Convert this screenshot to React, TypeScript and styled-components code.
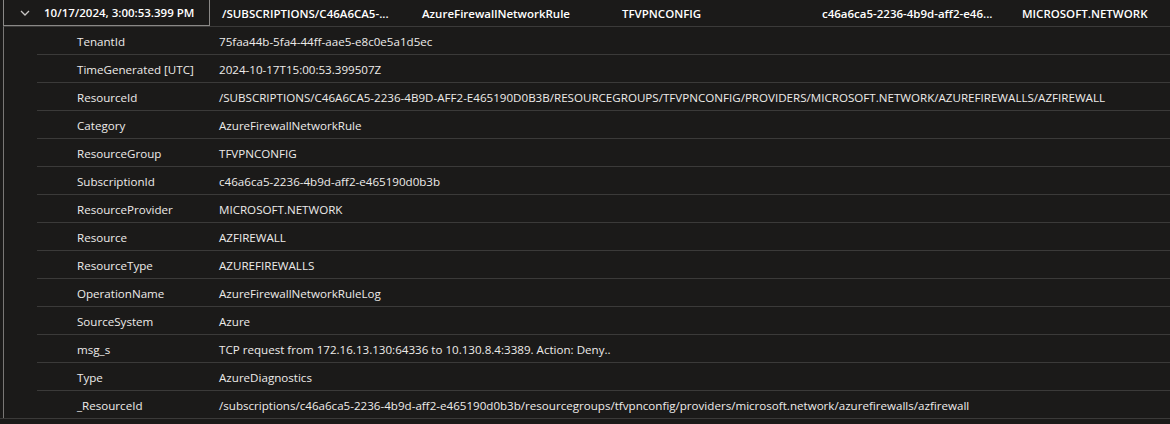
import * as React from 'react'
import styled, { createGlobalStyle } from 'styled-components'

const GlobalStyle = createGlobalStyle`
  html, body {
    margin: 0;
    padding: 0;
    background: #1b1a19;
  }
  body {
    font-family: 'Open Sans', 'Noto Sans', sans-serif;
    font-size: 11.6px;
    color: #edebe9;
  }
`

const columns = [
  '/SUBSCRIPTIONS/C46A6CA5-...',
  'AzureFirewallNetworkRule',
  'TFVPNCONFIG',
  'c46a6ca5-2236-4b9d-aff2-e46...',
  'MICROSOFT.NETWORK',
]

const details: [string, string][] = [
  ['TenantId', '75faa44b-5fa4-44ff-aae5-e8c0e5a1d5ec'],
  ['TimeGenerated [UTC]', '2024-10-17T15:00:53.399507Z'],
  [
    'ResourceId',
    '/SUBSCRIPTIONS/C46A6CA5-2236-4B9D-AFF2-E465190D0B3B/RESOURCEGROUPS/TFVPNCONFIG/PROVIDERS/MICROSOFT.NETWORK/AZUREFIREWALLS/AZFIREWALL',
  ],
  ['Category', 'AzureFirewallNetworkRule'],
  ['ResourceGroup', 'TFVPNCONFIG'],
  ['SubscriptionId', 'c46a6ca5-2236-4b9d-aff2-e465190d0b3b'],
  ['ResourceProvider', 'MICROSOFT.NETWORK'],
  ['Resource', 'AZFIREWALL'],
  ['ResourceType', 'AZUREFIREWALLS'],
  ['OperationName', 'AzureFirewallNetworkRuleLog'],
  ['SourceSystem', 'Azure'],
  ['msg_s', 'TCP request from 172.16.13.130:64336 to 10.130.8.4:3389. Action: Deny..'],
  ['Type', 'AzureDiagnostics'],
  [
    '_ResourceId',
    '/subscriptions/c46a6ca5-2236-4b9d-aff2-e465190d0b3b/resourcegroups/tfvpnconfig/providers/microsoft.network/azurefirewalls/azfirewall',
  ],
]

export default () => {
  return (
    <>
      <GlobalStyle />
      <Results>
        <HeaderRow>
          <FocusCell>
            <Chevron viewBox="0 0 10 6">
              <path d="M1 1l4 4 4-4" />
            </Chevron>
            <HeaderText>10/17/2024, 3:00:53.399 PM</HeaderText>
          </FocusCell>
          {columns.map((c) => (
            <HeaderCell key={c}>
              <HeaderText>{c}</HeaderText>
            </HeaderCell>
          ))}
        </HeaderRow>
        <DetailList>
          {details.map(([key, value]) => (
            <DetailRow key={key}>
              <DetailKey>{key}</DetailKey>
              <DetailValue>{value}</DetailValue>
            </DetailRow>
          ))}
        </DetailList>
      </Results>
    </>
  )
}

const Results = styled.div`
  width: 1170px;
  height: 424px;
  overflow: hidden;
`

const HeaderRow = styled.div`
  display: flex;
  height: 27px;
  margin-left: 3px;
  border-left: 1px solid #8a8886;
  border-bottom: 1px solid #3b3a39;
  box-sizing: border-box;
`

const FocusCell = styled.div`
  display: flex;
  align-items: center;
  width: 206px;
  height: 26px;
  border-right: 1px solid #8a8886;
  border-bottom: 1px solid #8a8886;
  box-sizing: border-box;
  padding-left: 16px;
  flex-shrink: 0;
`

const Chevron = styled.svg`
  width: 10px;
  height: 6px;
  fill: none;
  stroke: #c8c6c4;
  stroke-width: 1.3;
  margin-right: 14px;
`

const HeaderCell = styled.div`
  display: flex;
  align-items: center;
  width: 200px;
  height: 26px;
  padding-left: 12px;
  box-sizing: border-box;
  flex-shrink: 0;
`

const HeaderText = styled.span`
  color: #ffffff;
  font-size: 11.5px;
  font-weight: 600;
  white-space: nowrap;
`

const DetailList = styled.div`
  margin-left: 3px;
  border-left: 1px solid #797775;
`

const DetailRow = styled.div`
  display: flex;
  align-items: center;
  height: 28px;
  margin-left: 33px;
  padding: 1px 0 0 40px;
  box-sizing: border-box;
  border-bottom: 1px solid #3b3a39;

  &:last-child {
    margin-left: -4px;
    padding-left: 77px;
  }
`

const DetailKey = styled.div`
  width: 142px;
  flex-shrink: 0;
  white-space: nowrap;
`

const DetailValue = styled.div`
  white-space: nowrap;
`
